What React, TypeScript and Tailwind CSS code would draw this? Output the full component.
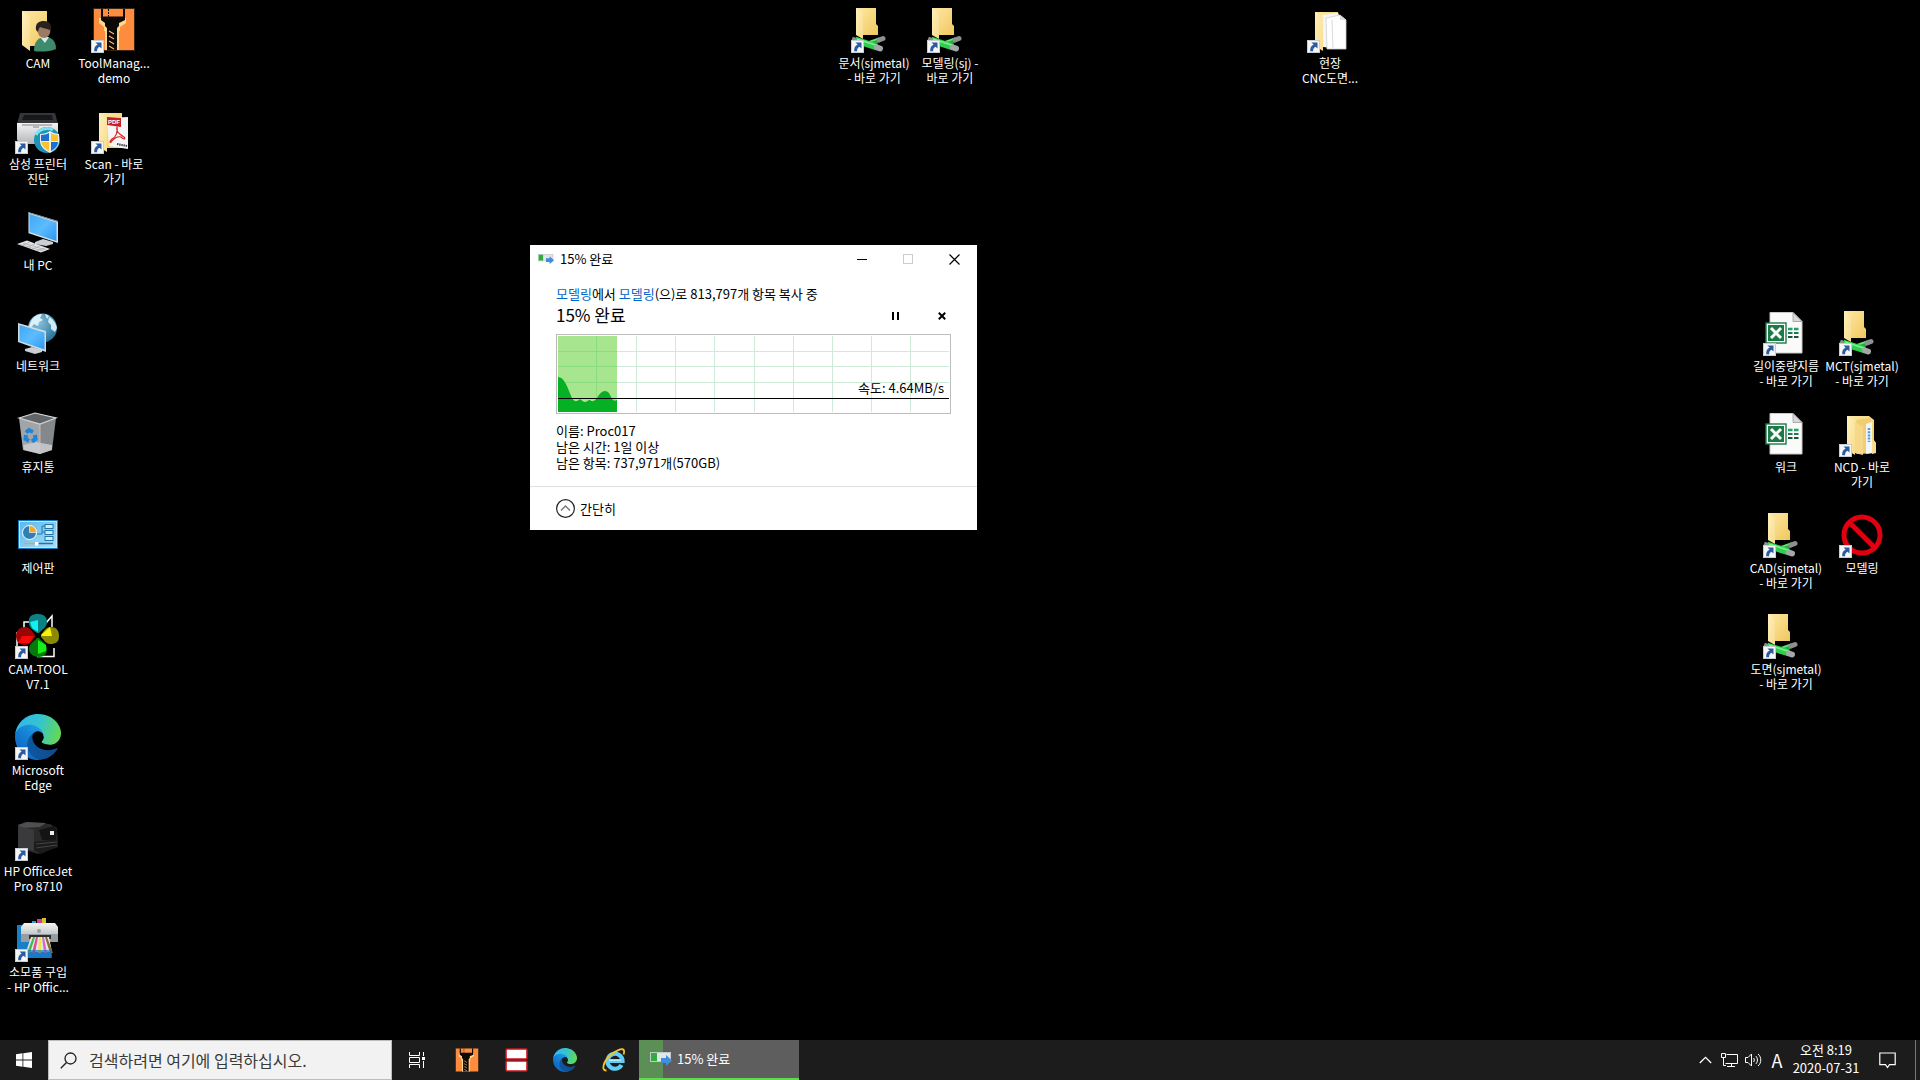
import type { ReactNode } from "react";

const FONT = "font-['Noto_Sans_CJK_KR','Noto_Sans',sans-serif]";

function Glyph({ children }: { children: ReactNode }) {
  return (
    <svg viewBox="0 0 48 48" className="size-12" aria-hidden="true">
      {children}
    </svg>
  );
}

function ShortcutArrow() {
  return (
    <svg viewBox="0 0 13 13" className="absolute bottom-px left-px size-[13px]" aria-hidden="true">
      <rect width="13" height="13" fill="#f4f6f8" />
      <rect x=".5" y=".5" width="12" height="12" fill="none" stroke="#c9ccd0" />
      <path d="M4.5 2.5H10.5V8.5L8.6 6.7C6.6 7.8 6 9 6.1 11.2H3.2C3 8 4 5.9 6.6 4.6Z" fill="#2c5a9e" />
    </svg>
  );
}

// gradients shared by every icon on the page
function Defs() {
  return (
    <svg className="absolute size-0" aria-hidden="true">
      <defs>
        <linearGradient id="folder" x1="0" y1="0" x2="1" y2="1">
          <stop offset="0" stopColor="#ffe9a6" />
          <stop offset="1" stopColor="#f0c75e" />
        </linearGradient>
        <linearGradient id="flap" x1="0" y1="0" x2="1" y2="1">
          <stop offset="0" stopColor="#fff0bd" />
          <stop offset="1" stopColor="#f8dc8b" />
        </linearGradient>
        <linearGradient id="screen" x1="0" y1="0" x2="1" y2="1">
          <stop offset="0" stopColor="#3fa6f5" />
          <stop offset=".5" stopColor="#5cbcff" />
          <stop offset="1" stopColor="#2b98f0" />
        </linearGradient>
        <radialGradient id="globe" cx=".35" cy=".3" r=".8">
          <stop offset="0" stopColor="#8cc4dc" />
          <stop offset="1" stopColor="#1f6d96" />
        </radialGradient>
        <linearGradient id="printer" x1="0" y1="0" x2="0" y2="1">
          <stop offset="0" stopColor="#f4f4f4" />
          <stop offset="1" stopColor="#b3b5b8" />
        </linearGradient>
        <linearGradient id="panel" x1="0" y1="0" x2="1" y2="1">
          <stop offset="0" stopColor="#5cb8ec" />
          <stop offset="1" stopColor="#a6e0fb" />
        </linearGradient>
        <linearGradient id="edgeDark" x1="58" y1="177" x2="236" y2="177" gradientUnits="userSpaceOnUse">
          <stop offset="0" stopColor="#0c59a4" />
          <stop offset="1" stopColor="#114a8b" />
        </linearGradient>
        <linearGradient id="edgeMid" x1="157" y1="99" x2="46" y2="220" gradientUnits="userSpaceOnUse">
          <stop offset="0" stopColor="#1b9de2" />
          <stop offset=".5" stopColor="#1680d4" />
          <stop offset="1" stopColor="#0d68c4" />
        </linearGradient>
        <linearGradient id="edgeTop" x1="10" y1="60" x2="240" y2="130" gradientUnits="userSpaceOnUse">
          <stop offset="0" stopColor="#31b8ec" />
          <stop offset=".5" stopColor="#35c3cf" />
          <stop offset="1" stopColor="#63d957" />
        </linearGradient>
      </defs>
    </svg>
  );
}

function EdgePaths() {
  return (
    <>
      <path
        fill="url(#edgeDark)"
        d="M231 190.5c-3.4 1.8-6.9 3.4-10.5 4.7-11.5 4.3-23.6 6.5-35.9 6.5-47.3 0-88.5-32.5-88.5-74.3.1-11.4 6.4-21.9 16.4-27.3-42.8 1.8-53.8 46.4-53.8 72.5 0 74 68.1 81.4 82.8 81.4 7.9 0 19.8-2.3 27-4.6l1.3-.4c27.6-9.5 51-28.1 66.6-52.8 1.2-1.9.6-4.3-1.2-5.5-1.3-.8-2.9-.9-4.2-.2z"
      />
      <path
        fill="url(#edgeMid)"
        d="M105.7 241.4c-8.9-5.5-16.6-12.8-22.7-21.3-26.3-36-18.4-86.5 17.6-112.8 3.8-2.7 7.7-5.2 11.9-7.2 3.1-1.5 8.4-4.1 15.5-4 10.1.1 19.6 4.9 25.7 13 4 5.4 6.3 11.9 6.4 18.7 0-.2 24.5-79.6-80-79.6-43.9 0-80 41.7-80 78.2-.2 19.3 4 38.5 12.1 56 27.6 58.8 94.8 87.6 156.4 67.1-21.1 6.6-44.1 3.7-62.9-8.1z"
      />
      <path
        fill="url(#edgeTop)"
        d="M152.3 148.9c-.8 1-3.3 2.5-3.3 5.7 0 2.6 1.7 5.1 4.7 7.2 14.4 10 41.5 8.7 41.6 8.7 10.7 0 21.1-2.9 30.3-8.3 18.8-11 30.4-31.1 30.4-52.9.3-22.4-8-37.3-11.3-43.9C223.5 23.9 177.7 0 128 0 58 0 1 56.2 0 126.2c.5-36.5 36.8-66 80-66 3.5 0 23.5.3 42 10.1 16.3 8.6 24.9 18.9 30.8 29.2 6.2 10.7 7.3 24.1 7.3 29.5s-2.7 13.3-7.8 19.9z"
      />
    </>
  );
}

function DrillPaths() {
  return (
    <>
      <rect x="3" y="2" width="42" height="43" fill="#3a2412" />
      <rect x="4" y="3" width="40" height="41" fill="#ff8b3d" />
      <path d="M9 12V17L14 21V25H15V44H29V25H30V21L36 17V12Z" fill="#ffd890" />
      <path d="M11 3V14L15 17V20L17 22V44H27V22L29 20V17L35 14V3Z" fill="#0b0805" />
      <path d="M13 3H33V10.500H13Z" fill="#ff8b3d" />
      <path d="M18.500 3V10.500" stroke="#0b0805" strokeDasharray="2 1" />
      <path d="M19 25L24 28M19 30L24 33M19 35L24 38M19 40L24 43" stroke="#ffb774" strokeWidth="1.200" />
    </>
  );
}

const UserFolder = () => (
  <Glyph>
    <path d="M8 5H33V40H16L8 38Z" fill="url(#folder)" />
    <path d="M8 5L16 11V45L8 39Z" fill="url(#flap)" />
    <path d="M20 45C20 36 24 31 31 31S42 35 42 43C36 46 25 46 20 45Z" fill="#3d8a6c" />
    <path d="M26 31L31 37L35 31Z" fill="#d8ece4" />
    <ellipse cx="30" cy="24" rx="6.5" ry="8" fill="#9c7a62" />
    <path d="M22 24C21 17 25 15 30 15S38 18 37 25C34 22 30 23 26 21C25 23 24 24 24 26Z" fill="#27211f" />
  </Glyph>
);

const ToolManager = () => (
  <Glyph>
    <DrillPaths />
  </Glyph>
);

const SamsungPrinter = () => (
  <Glyph>
    <path d="M6 6H41L44 17H3Z" fill="#34363a" />
    <path d="M10 8H38L39 13H8Z" fill="#17181a" />
    <path d="M3 16H44V34L40 37H7L3 33Z" fill="url(#printer)" />
    <path d="M8 18H38M19 20H25" stroke="#7f8286" />
    <circle cx="33" cy="33" r="13" fill="#1e93b5" />
    <path d="M22 28C25 22 33 20 39 23" stroke="#7fe0ee" strokeWidth="3" fill="none" />
    <path d="M26 27C30 27 33 26 36 24C39 26 42 27 45 27V34C45 39 41 43 36 46C30 43 26 39 26 34Z" fill="#e9eef2" />
    <path d="M27 28C30 28 33 27 35 26V34H27ZM37 35H44C44 39 41 42 37 44Z" fill="#1d6fd0" />
    <path d="M37 26C39 27 42 28 44 28V34H37ZM27 35H35V44C31 42 28 39 27 35Z" fill="#fbc02d" />
  </Glyph>
);

const PdfFolder = () => (
  <Glyph>
    <path d="M9 6H32V41H17L9 38Z" fill="url(#folder)" />
    <path d="M17 11L38 10V42L19 39Z" fill="#f5f5f5" />
    <path d="M9 6L17 11V45L9 40Z" fill="url(#flap)" />
    <path d="M17 10L31 11V20L17 18Z" fill="#c71f25" />
    <text x="18" y="17" fontSize="6" fontWeight="700" fill="#fff" fontFamily="Liberation Sans, sans-serif">
      PDF
    </text>
    <path
      d="M27 20C25 24 29 27 34 30C36 32 34 33 31 30C28 29 24 31 22 34C20 37 19 35 22 32C26 30 28 25 27 20Z"
      fill="none"
      stroke="#d8262c"
      strokeWidth="1.2"
    />
    <path d="M27 37L37 39" stroke="#444" strokeWidth="2" strokeDasharray="1.5 .7" />
  </Glyph>
);

const MyPc = () => (
  <Glyph>
    <path d="M21 34L29 31L39 34V36L32 38L21 36Z" fill="#c9cfd4" />
    <path d="M14 4L44 13V35L14 25Z" fill="#d9dfe3" />
    <path d="M14 4L44 13V14L15 5V25H14Z" fill="#6d7a84" />
    <path d="M15.500 6L42.500 14.500V33L15.500 24Z" fill="url(#screen)" />
    <path d="M3 36L13 32.500L36 41L27 44.500Z" fill="#e2e4e6" />
    <path d="M6 36.500L29 43M9 35L32 42M8 37.500L16 34M13 39L21 36M18 41L26 38M23 42.500L31 40" stroke="#a3a8ac" strokeWidth=".7" />
  </Glyph>
);

const NetworkPc = () => (
  <Glyph>
    <circle cx="28.500" cy="19" r="14.500" fill="url(#globe)" />
    <path d="M17 12C20 7 24 5 28 5L26 9L29 11L25 13L24 17L20 15L17 19L15 17Z" fill="#dcf1f7" />
    <path d="M35 8C39 10 42 14 43 19L41 23L37 20V16L34 13Z" fill="#cfeaf3" />
    <path d="M31 5L35 7L33 10Z" fill="#dcf1f7" />
    <path d="M11 40L18 38L28 41V43L21 45L11 42Z" fill="#c9cfd4" />
    <path d="M4 14L32 22V43L4 33Z" fill="#d3dade" />
    <path d="M5.500 16L30.500 23.500V40.500L5.500 32Z" fill="url(#screen)" />
  </Glyph>
);

const RecycleBin = () => (
  <Glyph>
    <path d="M5 8L26 14V44L9 40Z" fill="#a2a5a8" />
    <path d="M26 14L42 8L38 40L26 44Z" fill="#85888b" />
    <path d="M9 35L22 32L38 35V40L26 44L10 40Z" fill="#cfd1d3" opacity=".8" />
    <path d="M5 8L21 3L42 8L26 14Z" fill="#626568" stroke="#d5d7d9" strokeWidth="1.200" />
    <path d="M26 14V44" stroke="#c4c6c8" strokeWidth=".8" />
    <g fill="none" stroke="#1c86dc" strokeWidth="4">
      <path d="M12 22.500L15 20L19 22" />
      <path d="M21 25L21.500 29L18 31.500" />
      <path d="M15 31L11.500 29L12 25" />
    </g>
  </Glyph>
);

const ControlPanel = () => (
  <Glyph>
    <rect x="4" y="9" width="40" height="29" fill="#1479bd" />
    <rect x="5.500" y="10.500" width="37" height="26" fill="url(#panel)" stroke="#bde8fb" />
    <circle cx="15.500" cy="21.500" r="7" fill="#2f7fb5" stroke="#fff" strokeWidth="1" />
    <path d="M15.500 21.500V14.500A7 7 0 0 1 22.500 21.500Z" fill="#f7a823" stroke="#fff" strokeWidth=".6" />
    <path d="M23 23H28V15H31M28 21H31" stroke="#2576ab" fill="none" />
    <g fill="#c9edfc" stroke="#2576ab">
      <rect x="31" y="13.500" width="8" height="4" />
      <rect x="31" y="19.500" width="8" height="4" />
      <rect x="31" y="25.500" width="8" height="4" />
    </g>
    <path d="M10 32.500H21" stroke="#d8a95a" strokeWidth="1.500" />
    <path d="M22 32.500H39" stroke="#2576ab" strokeWidth="1.500" />
    <rect x="21" y="31" width="3.500" height="3.500" fill="#fff" />
  </Glyph>
);

const CamTool = () => (
  <Glyph>
    <path d="M10 17V10H16M32 11L38 4V15M3 20V38M23 44.500H40V36" fill="none" stroke="#fff" strokeWidth="1.500" />
    <path d="M15 11C14 4 18 2 24 2S33 5 33 10C33 15 29 17 25 21H23C19 18 15 16 15 11Z" fill="#0a8284" />
    <path d="M16 10L24 8V20L18 16Z" fill="#12f0f2" />
    <path d="M11 15C16 15 18 19 21 23V25C18 29 16 33 11 33C5 33 2 29 2 24S5 15 11 15Z" fill="#9a0505" />
    <path d="M4 31L8 24H20L15 31Z" fill="#f50a0a" />
    <path d="M36 15C42 15 45 18 45 24S42 32 36 32C32 32 30 28 27 25V23C30 19 32 15 36 15Z" fill="#8c8a04" />
    <path d="M27 23L36 15L38 24H28Z" fill="#f6f305" />
    <path d="M23 26H25C29 30 33 32 33 37C33 42 30 45 25 45S15 42 15 37C15 32 19 30 23 26Z" fill="#067a08" />
    <path d="M24 28L32 33V39L24 42Z" fill="#16f01a" />
  </Glyph>
);

const EdgeIcon = () => (
  <Glyph>
    <svg x="1" y="1" width="46" height="46" viewBox="0 0 256 256">
      <EdgePaths />
    </svg>
  </Glyph>
);

const OfficeJet = () => (
  <Glyph>
    <path d="M4 11L12 8L36 10L43 14L44 33L24 40L4 34Z" fill="#2a2a2b" />
    <path d="M4 11L13 8L32 9L26 13L8 14Z" fill="#4e4f51" />
    <path d="M4 12L20 16V37L4 33Z" fill="#3a3a3c" />
    <path d="M25 16L40 12L43 16L42 26L28 26Z" fill="#141415" />
    <path d="M20 28L43 25L44 32L27 40L20 36Z" fill="#1b1b1c" />
    <path d="M22 30L43 28M22 34L43 31" stroke="#454547" />
    <rect x="36" y="17" width="4" height="4" fill="#e8edf2" />
  </Glyph>
);

const InkPrinter = () => (
  <Glyph>
    <path d="M3 10H15V43H5L3 41Z" fill="#1780c8" />
    <path d="M14 30H37V43H14Z" fill="#1b78c4" />
    <path d="M18 6H22V9H18Z" fill="#2b9fe0" />
    <path d="M23 4H28V9H23Z" fill="#cf3f9b" />
    <path d="M28 3H32V9H28Z" fill="#d4c22c" />
    <path d="M10 8H41L44 12V24H7V12Z" fill="url(#printer)" />
    <path d="M7 19H44V27H7Z" fill="#9a9da0" />
    <path d="M15 20H37V24H15Z" fill="#2c2d2f" />
    <circle cx="25" cy="16" r="2" fill="#9a9da0" />
    <path d="M17 22H35L38 37H12Z" fill="#dfe7ec" />
    <path d="M19 22L13 38L16 38L21 22Z" fill="#47b64f" />
    <path d="M22 22L18 38H21L24 22Z" fill="#e54b8c" />
    <path d="M25 22L24 38H27V22Z" fill="#f2e24b" />
    <path d="M28 22L30 38H33L30 22Z" fill="#d96ac0" />
    <path d="M31 22L36 38H39L33 22Z" fill="#8a6a2e" />
    <path d="M12 35H38V43H12Z" fill="#1b78c4" opacity=".7" />
  </Glyph>
);

const NetFolder = () => (
  <Glyph>
    <path d="M6 2H26V18L28 20V29H12L6 27Z" fill="url(#folder)" />
    <path d="M6 2L13 7V33L6 29Z" fill="url(#flap)" />
    <path d="M15 39L30 33.500" stroke="#2ca646" strokeWidth="5" />
    <path d="M16 37L29 32.500" stroke="#6fe27e" strokeWidth="1.500" />
    <path d="M29 34L33 32.500" stroke="#8d9092" strokeWidth="5" strokeLinecap="round" />
    <path d="M2 33L6 34.500" stroke="#8d9092" strokeWidth="5" />
    <path d="M5 34L27 41" stroke="#2fce50" strokeWidth="7" />
    <path d="M7 33L27 39.500" stroke="#82ee8e" strokeWidth="1.600" />
    <path d="M27 41.500L30 42.500" stroke="#a4a7a9" strokeWidth="6" strokeLinecap="round" />
  </Glyph>
);

const PaperFolder = () => (
  <Glyph>
    <path d="M9 6H32L33 10V41H17L9 38Z" fill="url(#folder)" />
    <path d="M16 9L31 7L35 11V43L17 41Z" fill="#f6f6f6" />
    <path d="M20 12L34 9L40 14V43L21 43Z" fill="#fff" stroke="#cfcfcf" strokeWidth=".8" />
    <path d="M26 14L27 42" stroke="#cfcfcf" strokeWidth=".8" />
    <path d="M34 9V14H40" fill="#dcdcdc" />
    <path d="M9 6L17 11V45L9 40Z" fill="url(#flap)" />
  </Glyph>
);

const Excel = () => (
  <Glyph>
    <path d="M8 3.500H31L40 12.500V44H8Z" fill="#fafafa" stroke="#c8c8c8" />
    <path d="M31 3.500V12.500H40Z" fill="#d9d9d9" stroke="#9c9c9c" strokeWidth=".8" />
    <path d="M26 20H30.500M32 20H36.500" stroke="#21a366" strokeWidth="2.500" />
    <path d="M26 24H30.500M32 24H36.500" stroke="#1d7d4e" strokeWidth="2" />
    <path d="M26 28H30.500M32 28H36.500" stroke="#1b5437" strokeWidth="2" />
    <rect x="4" y="14" width="20" height="20" fill="#fff" stroke="#1c7a47" strokeWidth="1.400" />
    <rect x="6" y="16" width="16" height="16" fill="#1c7a47" />
    <path d="M9 19L19 29M19 19L9 29" stroke="#fff" strokeWidth="3" />
  </Glyph>
);

const FilesFolder = () => (
  <Glyph>
    <path d="M9 6H31L36 10V30L38 33V43L20 44L9 40Z" fill="url(#folder)" />
    <path d="M18 10L33 8V42H22Z" fill="#f1cd73" />
    <path d="M28 14L34 12V43L28 44Z" fill="#f2f6f9" />
    <path d="M31 18V32" stroke="#4a9dce" strokeWidth="2.500" strokeDasharray="2 1.200" />
    <path d="M9 6L17 11V45L9 40Z" fill="url(#flap)" />
    <path d="M17 12L25 17V45L17 43Z" fill="#f6d888" />
    <path d="M34 29L38 33V43L34 44Z" fill="#f7dc92" />
  </Glyph>
);

const Forbidden = () => (
  <Glyph>
    <circle cx="24" cy="24" r="18" fill="none" stroke="#e00010" strokeWidth="5" />
    <path d="M12 12L36 36" stroke="#e00010" strokeWidth="5" />
  </Glyph>
);

type DesktopItem = {
  label: string;
  cell: string;
  icon: () => ReactNode;
  shortcut?: boolean;
};

const ITEMS: DesktopItem[] = [
  { label: "CAM", cell: "col-start-1 row-start-1", icon: UserFolder },
  { label: "삼성 프린터\n진단", cell: "col-start-1 row-start-2", icon: SamsungPrinter, shortcut: true },
  { label: "내 PC", cell: "col-start-1 row-start-3", icon: MyPc },
  { label: "네트워크", cell: "col-start-1 row-start-4", icon: NetworkPc },
  { label: "휴지통", cell: "col-start-1 row-start-5", icon: RecycleBin },
  { label: "제어판", cell: "col-start-1 row-start-6", icon: ControlPanel },
  { label: "CAM-TOOL\nV7.1", cell: "col-start-1 row-start-7", icon: CamTool, shortcut: true },
  { label: "Microsoft\nEdge", cell: "col-start-1 row-start-8", icon: EdgeIcon, shortcut: true },
  { label: "HP OfficeJet\nPro 8710", cell: "col-start-1 row-start-9", icon: OfficeJet, shortcut: true },
  { label: "소모품 구입\n- HP Offic...", cell: "col-start-1 row-start-10", icon: InkPrinter, shortcut: true },
  { label: "ToolManag...\ndemo", cell: "col-start-2 row-start-1", icon: ToolManager, shortcut: true },
  { label: "Scan - 바로\n가기", cell: "col-start-2 row-start-2", icon: PdfFolder, shortcut: true },
  { label: "문서(sjmetal)\n- 바로 가기", cell: "col-start-12 row-start-1", icon: NetFolder, shortcut: true },
  { label: "모델링(sj) -\n바로 가기", cell: "col-start-13 row-start-1", icon: NetFolder, shortcut: true },
  { label: "현장\nCNC도면...", cell: "col-start-18 row-start-1", icon: PaperFolder, shortcut: true },
  { label: "길이중량지름\n- 바로 가기", cell: "col-start-24 row-start-4", icon: Excel, shortcut: true },
  { label: "워크", cell: "col-start-24 row-start-5", icon: Excel },
  { label: "CAD(sjmetal)\n- 바로 가기", cell: "col-start-24 row-start-6", icon: NetFolder, shortcut: true },
  { label: "도면(sjmetal)\n- 바로 가기", cell: "col-start-24 row-start-7", icon: NetFolder, shortcut: true },
  { label: "MCT(sjmetal)\n- 바로 가기", cell: "col-start-25 row-start-4", icon: NetFolder, shortcut: true },
  { label: "NCD - 바로\n가기", cell: "col-start-25 row-start-5", icon: FilesFolder, shortcut: true },
  { label: "모델링", cell: "col-start-25 row-start-6", icon: Forbidden, shortcut: true },
];

function DesktopIcon({ item }: { item: DesktopItem }) {
  const Icon = item.icon;
  return (
    <button type="button" className={`flex flex-col items-center gap-px pt-1.5 text-white ${item.cell}`}>
      <span className="relative block size-12">
        <Icon />
        {item.shortcut && <ShortcutArrow />}
      </span>
      <span className="text-center text-xs leading-[15px] whitespace-pre">{item.label}</span>
    </button>
  );
}

function CopyIcon({ className }: { className: string }) {
  return (
    <svg viewBox="0 0 22 14" className={className} aria-hidden="true">
      <rect x=".5" y=".5" width="20" height="9" fill="#e3e6e8" stroke="#c3c8cc" />
      <rect x="1" y="1" width="6" height="8" fill="#2fae3b" />
      <path d="M11 6H16V3L22 8.500L16 14V11H11Z" fill="#3b8fdb" />
    </svg>
  );
}

function SpeedGraph() {
  return (
    <div className="relative mt-[7px] h-20 border border-[#bcbcbc] p-px">
      <svg viewBox="0 0 391 76" preserveAspectRatio="none" className="block size-full" aria-hidden="true">
        <g fill="#cdebd8" shapeRendering="crispEdges">
          {[1, 2, 3, 4, 5, 6, 7, 8, 9].map((n) => (
            <rect key={n} x={Math.round(n * 39.1)} y="0" width="1" height="76" />
          ))}
          {[15, 30, 46].map((y) => (
            <rect key={y} x="0" y={y} width="391" height="1" />
          ))}
        </g>
        <rect width="59" height="76" fill="#a7e58f" />
        <path d="M38.500 0V76M0 15.500H59M0 30.500H59M0 46.500H59" stroke="#8bdc80" />
        <path
          d="M0 41C6 41 9 50 14 62C16 66 19 66 22 63C24 64 25 66 27 66C29 66 30 64 32 64C34 66 36 66 39 62C41 59 43 55 47 55C51 55 52 59 54 63C56 65 57 65 59 64V76H0Z"
          fill="#06b025"
        />
        <rect y="62" width="391" height="1" fill="#000" shapeRendering="crispEdges" />
      </svg>
      <span className="absolute right-1.5 bottom-[17px] leading-4">속도: 4.64MB/s</span>
    </div>
  );
}

function CopyDialog() {
  return (
    <section className="absolute top-[245px] left-[530px] w-[447px] bg-white text-[13px] leading-4 text-black">
      <header className="flex h-7 items-center">
        <CopyIcon className="ml-2 w-4" />
        <h1 className="ml-1.5 flex-1">15% 완료</h1>
        <button type="button" aria-label="최소화" className="flex h-7 w-[46px] items-center justify-center">
          <span className="h-px w-2.5 bg-black" />
        </button>
        <button type="button" aria-label="최대화" disabled className="flex h-7 w-[46px] items-center justify-center">
          <span className="size-2.5 border border-[#cccccc]" />
        </button>
        <button type="button" aria-label="닫기" className="flex h-7 w-[46px] items-center justify-center">
          <svg viewBox="0 0 11 11" className="size-[11px]" aria-hidden="true">
            <path d="M.5.5L10.500 10.500M10.500.5L.5 10.500" stroke="#000" strokeWidth="1.200" />
          </svg>
        </button>
      </header>

      <div className="px-[26px] pt-[13px] pb-[15px]">
        <p>
          <a href="#source" className="text-[#0066cc]">모델링</a>에서{" "}
          <a href="#target" className="text-[#0066cc]">모델링</a>(으)로 813,797개 항목 복사 중
        </p>
        <div className="mt-px flex items-center">
          <p className="flex-1 text-[17px] leading-6">15% 완료</p>
          <button type="button" aria-label="일시 중지" className="flex h-6 w-7 items-center justify-center gap-[3px] pt-0.5">
            <span className="h-2 w-0.5 bg-black" />
            <span className="h-2 w-0.5 bg-black" />
          </button>
          <button type="button" aria-label="취소" className="ml-6 flex h-6 w-[18px] items-center justify-center pt-0.5">
            <svg viewBox="0 0 8 8" className="size-2" aria-hidden="true">
              <path d="M.8.8L7.200 7.200M7.200.8L.8 7.200" stroke="#000" strokeWidth="2" />
            </svg>
          </button>
        </div>
        <SpeedGraph />
        <div className="mt-[9px]">
          <p>이름: Proc017</p>
          <p>남은 시간: 1일 이상</p>
          <p>남은 항목: 737,971개(570GB)</p>
        </div>
      </div>

      <footer className="border-t border-[#dfdfdf] px-[26px] py-3">
        <button type="button" className="flex items-center gap-[5px]">
          <svg viewBox="0 0 19 19" className="size-[19px]" aria-hidden="true">
            <circle cx="9.500" cy="9.500" r="8.900" fill="none" stroke="#222" strokeWidth="1.200" />
            <path d="M5 11.500L9.500 7L14 11.500" fill="none" stroke="#777" strokeWidth="1.400" />
          </svg>
          간단히
        </button>
      </footer>
    </section>
  );
}

function TaskbarButton({ label, children }: { label: string; children: ReactNode }) {
  return (
    <button type="button" aria-label={label} className="flex w-12 items-center justify-center">
      {children}
    </button>
  );
}

function Taskbar() {
  return (
    <footer className="flex h-10 bg-[#1c1c1c] text-white">
      <TaskbarButton label="시작">
        <svg viewBox="0 0 16 16" className="size-4" fill="#fff" aria-hidden="true">
          <path d="M0 2.200L6.500 1.300V7.500H0ZM7.300 1.200L16 0V7.500H7.300ZM0 8.400H6.500V14.700L0 13.800ZM7.300 8.400H16V16L7.300 14.800Z" />
        </svg>
      </TaskbarButton>
      <label className="flex w-[344px] items-center border border-[#bdbdbd] bg-[#f2f2f2] pl-[11px]">
        <svg viewBox="0 0 17 17" className="size-[17px]" aria-hidden="true">
          <circle cx="10.500" cy="6.500" r="5.500" fill="none" stroke="#222" strokeWidth="1.300" />
          <path d="M6.500 10.500L.8 16.200" stroke="#222" strokeWidth="1.400" />
        </svg>
        <input
          type="text"
          aria-label="검색"
          placeholder="검색하려면 여기에 입력하십시오."
          className="ml-3 min-w-0 flex-1 bg-transparent text-base leading-6 outline-none placeholder:text-[#3a3a3a]"
        />
      </label>
      <TaskbarButton label="작업 보기">
        <svg viewBox="0 0 17 16" className="h-4 w-[17px]" fill="none" stroke="#fff" aria-hidden="true">
          <path d="M1.500 0V3.500H11.500V0M1.500 16V12.500H11.500V16M1.500 5.500H11.500V10.500H1.500ZM15.500 0V4M15.500 9V16" />
          <rect x="14" y="5" width="3" height="3" fill="#fff" stroke="none" />
        </svg>
      </TaskbarButton>
      <div className="ml-[3px] flex gap-px">
        <TaskbarButton label="ToolManager">
          <svg viewBox="3 2 42 43" className="size-6" aria-hidden="true">
            <DrillPaths />
          </svg>
        </TaskbarButton>
        <TaskbarButton label="CAM">
          <svg viewBox="0 0 23 24" className="h-6 w-[23px]" aria-hidden="true">
            <rect x="1" y="1" width="21" height="10" rx="1" fill="#fff" stroke="#c8151b" strokeWidth="1.600" />
            <rect x="1" y="13" width="21" height="10" rx="1" fill="#fff" stroke="#c8151b" strokeWidth="1.600" />
          </svg>
        </TaskbarButton>
        <TaskbarButton label="Microsoft Edge">
          <svg viewBox="0 0 256 256" className="size-6" aria-hidden="true">
            <EdgePaths />
          </svg>
        </TaskbarButton>
        <TaskbarButton label="Internet Explorer">
          <svg viewBox="0 0 24 24" className="size-6" fill="none" aria-hidden="true">
            <path d="M7 13H20.500A7.500 7.500 0 1 0 19.500 17" stroke="#5fcdf5" strokeWidth="4.200" />
            <path d="M7 12.200H19" stroke="#c5f0ff" strokeWidth="1.200" />
            <path d="M4.500 22.500C-1 23 1 14 8 7.500C14 2 21 -.5 22 2.500C22.500 4 22 5.500 21.500 6.500" stroke="#f4c430" strokeWidth="1.800" />
          </svg>
        </TaskbarButton>
        <button
          type="button"
          className="flex w-40 items-center border-b-2 border-[#5fdc4c] bg-[linear-gradient(90deg,#5b8f55_24px,#5e5e5e_24px)] pl-[11px] text-[13px] leading-4"
        >
          <CopyIcon className="w-[22px]" />
          <span className="ml-[5px]">15% 완료</span>
        </button>
      </div>

      <div className="ml-auto flex items-center">
        <button type="button" aria-label="숨겨진 아이콘 표시" className="flex w-6 justify-center">
          <svg viewBox="0 0 13 8" className="h-2 w-[13px]" fill="none" stroke="#fff" strokeWidth="1.300" aria-hidden="true">
            <path d="M.8 7L6.500 1.300L12.200 7" />
          </svg>
        </button>
        <button type="button" aria-label="네트워크" className="flex w-6 justify-center">
          <svg viewBox="0 0 17 14" className="h-3.5 w-[17px]" fill="none" stroke="#fff" aria-hidden="true">
            <path d="M5.500 1.500H16.500V10.500H4.500M10.500 10.500V13M6 13.500H14M.5.500H4.500V4.500H.5ZM2.500 4.500V12.500H5" />
          </svg>
        </button>
        <button type="button" aria-label="볼륨" className="flex w-6 justify-center">
          <svg viewBox="0 0 17 14" className="h-3.5 w-[17px]" fill="none" stroke="#fff" aria-hidden="true">
            <path d="M.5 4.500H3L6.500 1V13L3 9.500H.5Z" />
            <path d="M8.500 5C9.500 6 9.500 8 8.500 9M10.700 3C13 5 13 9 10.700 11M13 1C16.700 4 16.700 10 13 13" />
          </svg>
        </button>
        <button type="button" className="w-6 text-center text-lg leading-6">
          A
        </button>
        <button type="button" className="w-[74px] pb-0.5 text-center text-[13px] leading-[18px] whitespace-pre">
          {"오전 8:19\n2020-07-31"}
        </button>
        <TaskbarButton label="알림">
          <svg viewBox="0 0 17 17" className="size-[17px]" fill="none" stroke="#fff" strokeWidth="1.200" aria-hidden="true">
            <path d="M.8 1H16.200V12.700H10.500L8.500 15.500L6.500 12.700H.8Z" />
          </svg>
        </TaskbarButton>
        <button type="button" aria-label="바탕 화면 보기" className="ml-1 h-10 w-[5px] border-l border-[#777777]" />
      </div>
    </footer>
  );
}

export default function App() {
  return (
    <div className={`flex min-h-screen flex-col bg-black ${FONT}`}>
      <Defs />
      <main className="relative grid flex-1 auto-rows-[101px] grid-cols-[repeat(25,76px)] overflow-hidden">
        {ITEMS.map((item) => (
          <DesktopIcon key={item.cell} item={item} />
        ))}
        <CopyDialog />
      </main>
      <Taskbar />
    </div>
  );
}
